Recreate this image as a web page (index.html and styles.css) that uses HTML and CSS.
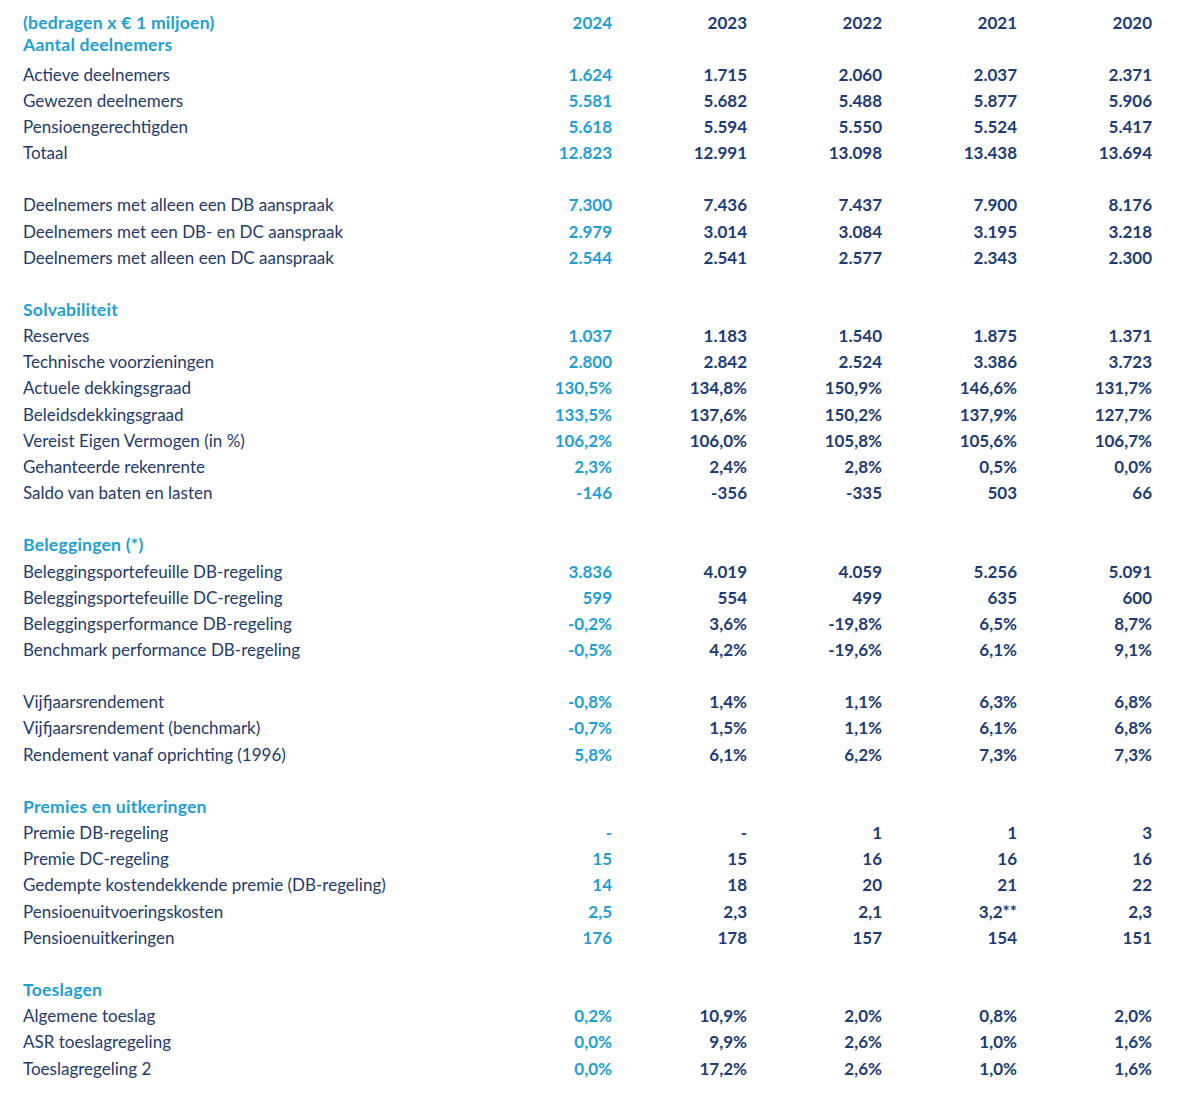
FILE: index.html
```html
<!DOCTYPE html>
<html lang="nl">
<head>
<meta charset="utf-8">
<title>Kerncijfers</title>
<link rel="stylesheet" href="styles.css">
</head>
<body>
<div class="table">
  <div class="head">
    <div class="row hrow">
      <div class="lbl title">(bedragen x € 1 miljoen)</div>
      <div class="num cur">2024</div><div class="num">2023</div><div class="num">2022</div><div class="num">2021</div><div class="num">2020</div>
    </div>
    <div class="row hrow"><div class="lbl title">Aantal deelnemers</div></div>
  </div>
  <div class="body">
    <div class="row"><div class="lbl">Actieve deelnemers</div><div class="num cur">1.624</div><div class="num">1.715</div><div class="num">2.060</div><div class="num">2.037</div><div class="num">2.371</div></div>
    <div class="row"><div class="lbl">Gewezen deelnemers</div><div class="num cur">5.581</div><div class="num">5.682</div><div class="num">5.488</div><div class="num">5.877</div><div class="num">5.906</div></div>
    <div class="row"><div class="lbl">Pensioengerechtigden</div><div class="num cur">5.618</div><div class="num">5.594</div><div class="num">5.550</div><div class="num">5.524</div><div class="num">5.417</div></div>
    <div class="row"><div class="lbl">Totaal</div><div class="num cur">12.823</div><div class="num">12.991</div><div class="num">13.098</div><div class="num">13.438</div><div class="num">13.694</div></div>
    <div class="row"></div>
    <div class="row"><div class="lbl">Deelnemers met alleen een DB aanspraak</div><div class="num cur">7.300</div><div class="num">7.436</div><div class="num">7.437</div><div class="num">7.900</div><div class="num">8.176</div></div>
    <div class="row"><div class="lbl">Deelnemers met een DB- en DC aanspraak</div><div class="num cur">2.979</div><div class="num">3.014</div><div class="num">3.084</div><div class="num">3.195</div><div class="num">3.218</div></div>
    <div class="row"><div class="lbl">Deelnemers met alleen een DC aanspraak</div><div class="num cur">2.544</div><div class="num">2.541</div><div class="num">2.577</div><div class="num">2.343</div><div class="num">2.300</div></div>
    <div class="row"></div>
    <div class="row"><div class="lbl title">Solvabiliteit</div></div>
    <div class="row"><div class="lbl">Reserves</div><div class="num cur">1.037</div><div class="num">1.183</div><div class="num">1.540</div><div class="num">1.875</div><div class="num">1.371</div></div>
    <div class="row"><div class="lbl">Technische voorzieningen</div><div class="num cur">2.800</div><div class="num">2.842</div><div class="num">2.524</div><div class="num">3.386</div><div class="num">3.723</div></div>
    <div class="row"><div class="lbl">Actuele dekkingsgraad</div><div class="num cur">130,5%</div><div class="num">134,8%</div><div class="num">150,9%</div><div class="num">146,6%</div><div class="num">131,7%</div></div>
    <div class="row"><div class="lbl">Beleidsdekkingsgraad</div><div class="num cur">133,5%</div><div class="num">137,6%</div><div class="num">150,2%</div><div class="num">137,9%</div><div class="num">127,7%</div></div>
    <div class="row"><div class="lbl">Vereist Eigen Vermogen (in %)</div><div class="num cur">106,2%</div><div class="num">106,0%</div><div class="num">105,8%</div><div class="num">105,6%</div><div class="num">106,7%</div></div>
    <div class="row"><div class="lbl">Gehanteerde rekenrente</div><div class="num cur">2,3%</div><div class="num">2,4%</div><div class="num">2,8%</div><div class="num">0,5%</div><div class="num">0,0%</div></div>
    <div class="row"><div class="lbl">Saldo van baten en lasten</div><div class="num cur">-146</div><div class="num">-356</div><div class="num">-335</div><div class="num">503</div><div class="num">66</div></div>
    <div class="row"></div>
    <div class="row"><div class="lbl title">Beleggingen (*)</div></div>
    <div class="row"><div class="lbl">Beleggingsportefeuille DB-regeling</div><div class="num cur">3.836</div><div class="num">4.019</div><div class="num">4.059</div><div class="num">5.256</div><div class="num">5.091</div></div>
    <div class="row"><div class="lbl">Beleggingsportefeuille DC-regeling</div><div class="num cur">599</div><div class="num">554</div><div class="num">499</div><div class="num">635</div><div class="num">600</div></div>
    <div class="row"><div class="lbl">Beleggingsperformance DB-regeling</div><div class="num cur">-0,2%</div><div class="num">3,6%</div><div class="num">-19,8%</div><div class="num">6,5%</div><div class="num">8,7%</div></div>
    <div class="row"><div class="lbl">Benchmark performance DB-regeling</div><div class="num cur">-0,5%</div><div class="num">4,2%</div><div class="num">-19,6%</div><div class="num">6,1%</div><div class="num">9,1%</div></div>
    <div class="row"></div>
    <div class="row"><div class="lbl">Vijfjaarsrendement</div><div class="num cur">-0,8%</div><div class="num">1,4%</div><div class="num">1,1%</div><div class="num">6,3%</div><div class="num">6,8%</div></div>
    <div class="row"><div class="lbl">Vijfjaarsrendement (benchmark)</div><div class="num cur">-0,7%</div><div class="num">1,5%</div><div class="num">1,1%</div><div class="num">6,1%</div><div class="num">6,8%</div></div>
    <div class="row"><div class="lbl">Rendement vanaf oprichting (1996)</div><div class="num cur">5,8%</div><div class="num">6,1%</div><div class="num">6,2%</div><div class="num">7,3%</div><div class="num">7,3%</div></div>
    <div class="row"></div>
    <div class="row"><div class="lbl title">Premies en uitkeringen</div></div>
    <div class="row"><div class="lbl">Premie DB-regeling</div><div class="num cur">-</div><div class="num">-</div><div class="num">1</div><div class="num">1</div><div class="num">3</div></div>
    <div class="row"><div class="lbl">Premie DC-regeling</div><div class="num cur">15</div><div class="num">15</div><div class="num">16</div><div class="num">16</div><div class="num">16</div></div>
    <div class="row"><div class="lbl">Gedempte kostendekkende premie (DB-regeling)</div><div class="num cur">14</div><div class="num">18</div><div class="num">20</div><div class="num">21</div><div class="num">22</div></div>
    <div class="row"><div class="lbl">Pensioenuitvoeringskosten</div><div class="num cur">2,5</div><div class="num">2,3</div><div class="num">2,1</div><div class="num">3,2**</div><div class="num">2,3</div></div>
    <div class="row"><div class="lbl">Pensioenuitkeringen</div><div class="num cur">176</div><div class="num">178</div><div class="num">157</div><div class="num">154</div><div class="num">151</div></div>
    <div class="row"></div>
    <div class="row"><div class="lbl title">Toeslagen</div></div>
    <div class="row"><div class="lbl">Algemene toeslag</div><div class="num cur">0,2%</div><div class="num">10,9%</div><div class="num">2,0%</div><div class="num">0,8%</div><div class="num">2,0%</div></div>
    <div class="row"><div class="lbl">ASR toeslagregeling</div><div class="num cur">0,0%</div><div class="num">9,9%</div><div class="num">2,6%</div><div class="num">1,0%</div><div class="num">1,6%</div></div>
    <div class="row"><div class="lbl">Toeslagregeling 2</div><div class="num cur">0,0%</div><div class="num">17,2%</div><div class="num">2,6%</div><div class="num">1,0%</div><div class="num">1,6%</div></div>
  </div>
</div>
</body>
</html>
```

FILE: styles.css
```css
html, body {
  margin: 0;
  padding: 0;
  background: #ffffff;
}

body {
  font-family: Lato, "Open Sans", sans-serif;
  font-size: 17px;
  color: #233a6e;
}

.table {
  padding: 11px 0 0 23px;
}

.head {
  padding-bottom: 6px;
}

.row {
  display: grid;
  grid-template-columns: 454px repeat(5, 135px);
  height: 26.16px;
  align-items: center;
  white-space: nowrap;
}

.hrow {
  height: 22px;
}

.lbl {
  color: #233a6e;
}

.title {
  color: #1e9fd6;
  font-weight: 700;
  font-size: 17.6px;
  letter-spacing: 0.2px;
}

.num {
  text-align: right;
  font-weight: 700;
  color: #1c3c78;
}

.num.cur {
  color: #1e9fd6;
}
```
